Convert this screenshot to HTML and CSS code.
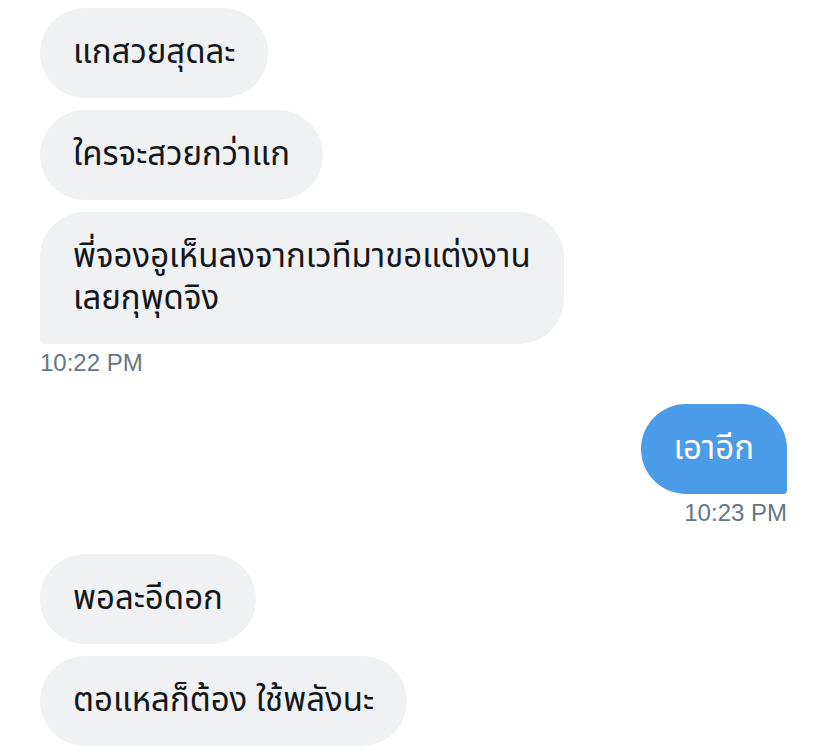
FILE: index.html
```html
<!DOCTYPE html>
<html lang="th">
<head>
<meta charset="utf-8">
<link rel="stylesheet" href="styles.css">
</head>
<body>
<div class="chat">
  <div class="group in">
    <div class="bubble">แกสวยสุดละ</div>
    <div class="bubble">ใครจะสวยกว่าแก</div>
    <div class="bubble last">พี่จองอูเห็นลงจากเวทีมาขอแต่งงาน<br>เลยกุพุดจิง</div>
    <div class="time">10:22 PM</div>
  </div>
  <div class="group out">
    <div class="bubble last">เอาอีก</div>
    <div class="time">10:23 PM</div>
  </div>
  <div class="group in">
    <div class="bubble">พอละอีดอก</div>
    <div class="bubble">ตอแหลก็ต้อง ใช้พลังนะ</div>
  </div>
</div>
</body>
</html>
```

FILE: styles.css
```css
html, body {
  margin: 0;
  padding: 0;
  background: #ffffff;
}
.chat {
  width: 827px;
  height: 753px;
  box-sizing: border-box;
  padding: 8px 40px 0 40px;
  display: flex;
  flex-direction: column;
  gap: 28px;
  overflow: hidden;
  font-family: "Noto Sans Thai", "Noto Sans", "DejaVu Sans", sans-serif;
}
.group {
  display: flex;
  flex-direction: column;
  gap: 12px;
}
.group.in { align-items: flex-start; }
.group.out { align-items: flex-end; }
.bubble {
  box-sizing: border-box;
  padding: 24px 33px;
  border-radius: 45px;
  font-size: 33px;
  line-height: 42px;
  color: #14171a;
  background: #eff1f3;
}
.group.in .bubble.last { border-bottom-left-radius: 4px; }
.group.out .bubble {
  background: #4a9be8;
  color: #ffffff;
}
.group.out .bubble.last { border-bottom-right-radius: 4px; }
.time {
  margin-top: -6px;
  font-family: "Liberation Sans", Arial, sans-serif;
  font-size: 24px;
  line-height: 26px;
  color: #657786;
}
```
